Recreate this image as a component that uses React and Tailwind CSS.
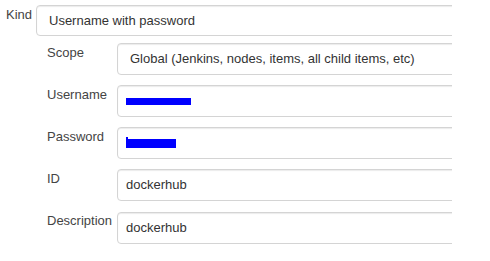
const fontStyle = "font-['Liberation_Sans',Arial,sans-serif]";

const Box = ({ children, pad = 'pl-2' }) => (
  <div
    className={`flex h-[32px] w-[520px] shrink-0 items-center rounded-[4px] border border-[#d4d4d4] bg-white ${pad} text-[13px] text-[#333] shadow-[inset_0_1px_1px_rgba(0,0,0,0.08)]`}
  >
    {children}
  </div>
);

const Row = ({ label, children }) => (
  <div className="flex">
    <div className="w-[70px] shrink-0 text-[13px] leading-[20px] text-[#444]">{label}</div>
    {children}
  </div>
);

export default function App() {
  return (
    <div className={`h-[261px] w-[490px] bg-white ${fontStyle}`}>
      <div className="w-[452px] overflow-hidden pt-[5px]">
        <div className="flex">
          <div className="w-[36px] shrink-0 pl-[6px] text-[13px] leading-[20px] text-[#444]">Kind</div>
          <div className="flex h-[31px] w-[520px] shrink-0 items-center rounded-[4px] border border-[#d4d4d4] bg-white pl-3 text-[13px] text-[#333] shadow-[inset_0_1px_1px_rgba(0,0,0,0.08)]">
            Username with password
          </div>
        </div>

        <div className="mt-[7px] flex flex-col gap-[10px] pl-[47px]">
          <Row label="Scope">
            <Box pad="pl-3">Global (Jenkins, nodes, items, all child items, etc)</Box>
          </Row>
          <Row label="Username">
            <Box>
              <div className="mt-[1px] h-[7px] w-[65px] bg-[#0000ff]" />
            </Box>
          </Row>
          <Row label="Password">
            <Box>
              <div className="relative mt-[1px] h-[9px] w-[50px] bg-[#0000ff]">
                <div className="absolute -top-[2px] left-0 h-[2px] w-[2px] bg-[#0000ff]" />
              </div>
            </Box>
          </Row>
          <Row label="ID">
            <Box>dockerhub</Box>
          </Row>
          <Row label="Description">
            <div className="mt-[1px]">
              <Box>dockerhub</Box>
            </div>
          </Row>
        </div>
      </div>
    </div>
  );
}
